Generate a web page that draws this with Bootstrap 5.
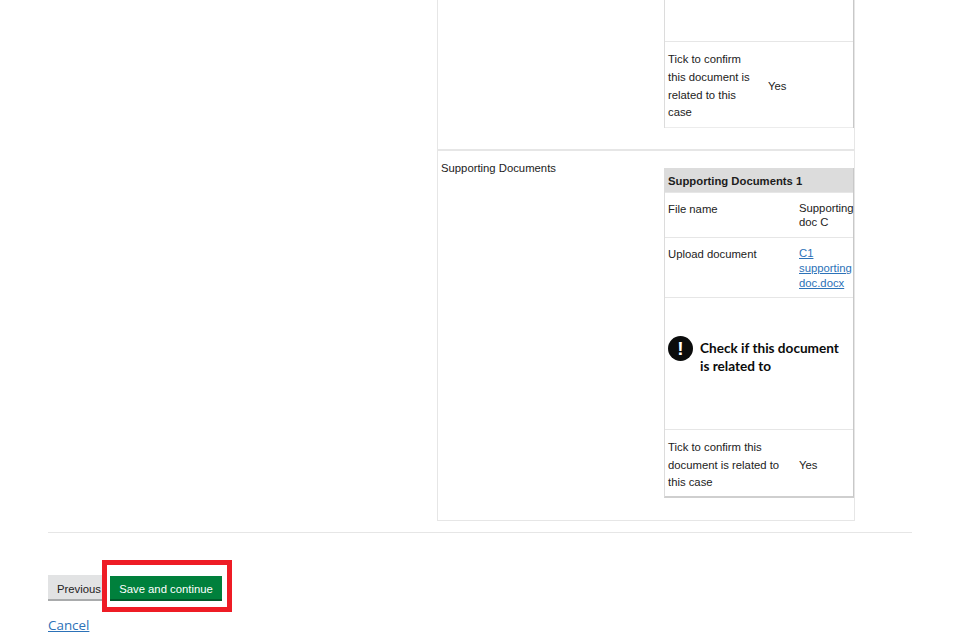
<!DOCTYPE html>
<html lang="en"><head><meta charset="utf-8"><title>Check</title>
<link href="https://cdn.jsdelivr.net/npm/bootstrap@5.3.0/dist/css/bootstrap.min.css" rel="stylesheet">
<style>
html,body{height:640px;overflow:hidden;background:#fff}
body{font-family:"Liberation Sans",Arial,sans-serif;font-size:11.3px;color:#222;position:relative}
.shell{padding:0 48px}
.summary-box{width:418px;margin-left:389px;border:solid #e6e6e6;border-width:0 1px 1px 1px}
.sum-row{display:flex}
.sum-row+.sum-row{border-top:2px solid #e6e6e6}
.first-row{height:149px}
.second-row{height:371px;padding-top:17px}
.sum-label{width:226px;flex:none;padding-left:3px;line-height:1;margin-top:-5px;height:11px}
.inner{width:190px;flex:none;border-left:1px solid #dcdcdc;border-right:1px solid #c8c8c8}
.inner-a{height:128px}
.inner-b{height:330px;border-bottom:2px solid #cfcfcf}
.cell-row{display:flex;border-top:1px solid #e6e6e6;padding-left:3px}
.key{flex:none;padding-right:8px}
.blank-row{height:41px;border-top:0;border-bottom:0}
.tick-a{height:87px;align-items:center;border-bottom:1px solid #ececec}
.tick-a .key{width:100px;line-height:17.7px;padding-top:4px}
.tick-a .val{padding-top:4px}
.head-row{height:24px;background:#dcdcdc;font-weight:700;align-items:center;border:0;padding-top:2px;color:#1c1c1c}
.file-row{height:45px;line-height:14px}
.file-row .key{width:131px;padding-top:9px}
.file-row .val{padding-top:8px}
.up-row{height:60px;line-height:15.2px}
.up-row .key{width:131px;padding-top:9px}
.up-row .val{padding-top:8px}
.up-row a{color:#2c72b8}
.warn-row{height:132px;padding-left:3px;padding-top:38px;gap:7px}
.warn-ico{width:25px;height:25px;border-radius:50%;background:#0b0c0c;color:#fff;font-weight:700;font-size:19px;line-height:25px;text-align:center;flex:none}
.warn-text{font-family:"Lato",sans-serif;font-weight:700;font-size:13.6px;line-height:18px;color:#0b0c0c;padding-top:3px}
.tick-b{height:68px;align-items:center}
.tick-b .key{width:131px;line-height:17.7px;padding-top:4px}
.tick-b .val{padding-top:4px}
.rule{border-top:1px solid #e6e6e6;margin-top:11px}
.actions{margin-top:42px;align-items:flex-start}
.btn-prev{width:56px;height:26px;background:#e2e3e4;border:0;border-bottom:2px solid #a9abac;border-radius:0;font-size:11.3px;color:#222;padding:4px 0 0 9px;text-align:left;white-space:nowrap;overflow:hidden}
.btn-save{width:112px;height:25px;margin-left:6px;margin-top:1px;background:#00803c;border:0;border-bottom:2px solid #005a2b;border-radius:0;font-size:11.3px;color:#fff;padding:3px 0 0}
.cancel-link{display:block;margin-top:16px;font-size:13.4px;line-height:17px;color:#2c72b8;font-family:"Open Sans",sans-serif}
.callout{position:absolute;left:102px;top:560px;width:130px;height:52px;border:5px solid #ee1c25;pointer-events:none}
</style></head>
<body>
<main class="shell">
  <section class="summary-box">
    <div class="sum-row first-row">
      <div class="sum-label"></div>
      <div class="inner inner-a">
        <div class="cell-row blank-row"></div>
        <div class="cell-row tick-a"><div class="key">Tick to confirm this document is related to this case</div><div class="val">Yes</div></div>
      </div>
    </div>
    <div class="sum-row second-row">
      <div class="sum-label">Supporting Documents</div>
      <div class="inner inner-b">
        <div class="cell-row head-row">Supporting Documents 1</div>
        <div class="cell-row file-row"><div class="key">File name</div><div class="val">Supporting<br>doc C</div></div>
        <div class="cell-row up-row"><div class="key">Upload document</div><div class="val"><a href="#">C1<br>supporting<br>doc.docx</a></div></div>
        <div class="cell-row warn-row"><div class="warn-ico">!</div><div class="warn-text">Check if this document<br>is related to</div></div>
        <div class="cell-row tick-b"><div class="key">Tick to confirm this document is related to this case</div><div class="val">Yes</div></div>
      </div>
    </div>
  </section>
  <div class="rule"></div>
  <div class="d-flex actions">
    <button class="btn btn-prev" type="button">Previous</button>
    <button class="btn btn-save" type="button">Save and continue</button>
  </div>
  <a class="cancel-link" href="#">Cancel</a>
</main>
<div class="callout"></div>
</body></html>
